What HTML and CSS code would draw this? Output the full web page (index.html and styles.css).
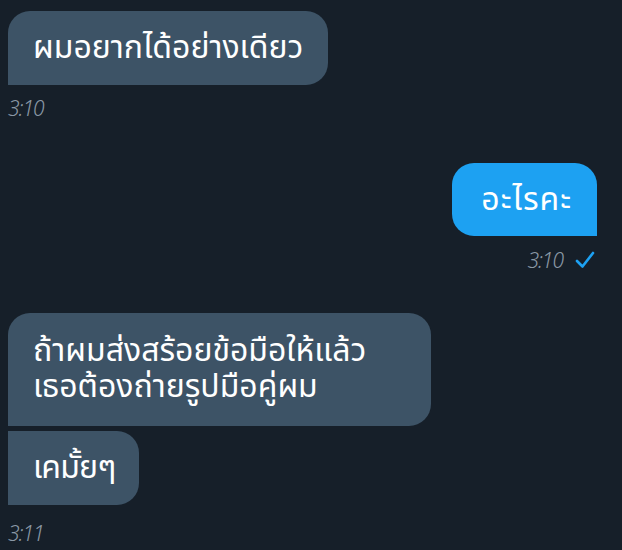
FILE: index.html
```html
<!DOCTYPE html>
<html lang="th">
<head>
<meta charset="utf-8">
<link rel="stylesheet" href="styles.css">
</head>
<body>
<div class="chat">
  <div class="msg in">
    <div class="bubble in-single">ผมอยากได้อย่างเดียว</div>
    <div class="time">3:10</div>
  </div>
  <div class="msg out">
    <div class="bubble out-single">อะไรคะ</div>
    <div class="time out-time">3:10
      <svg class="check" viewBox="0 0 20 18" width="20" height="18"><path d="M2 10 L7.5 15.5 L18 2" fill="none" stroke="#1da1f2" stroke-width="2.6" stroke-linecap="round" stroke-linejoin="round"/></svg>
    </div>
  </div>
  <div class="msg in group">
    <div class="bubble in-first">ถ้าผมส่งสร้อยข้อมือให้แล้ว<br>เธอต้องถ่ายรูปมือคู่ผม</div>
    <div class="bubble in-last">เคมั้ยๆ</div>
    <div class="time">3:11</div>
  </div>
</div>
</body>
</html>
```

FILE: styles.css
```css
html, body {
  margin: 0;
  padding: 0;
  background: #161f29;
}
body {
  width: 622px;
  height: 550px;
  overflow: hidden;
  font-family: "Noto Sans Thai", "Noto Sans", sans-serif;
}
.chat {
  display: flex;
  flex-direction: column;
  padding: 11px 25px 0 8px;
}
.msg {
  display: flex;
  flex-direction: column;
}
.msg.in { align-items: flex-start; }
.msg.out { align-items: flex-end; margin-top: 42px; }
.msg.group { margin-top: 40px; gap: 5px; }
.bubble {
  color: #ffffff;
  font-size: 32px;
  line-height: 36px;
  padding: 19px 25px;
  background: #3d5366;
}
.in-single { border-radius: 22px 22px 22px 0; }
.in-first { border-radius: 22px 22px 22px 0; padding: 20px 65px 21px 25px; }
.in-last { border-radius: 0 22px 22px 0; padding: 19px 24px 19px 25px; letter-spacing: -0.8px; }
.out-single { background: #1da1f2; border-radius: 22px 22px 0 22px; padding: 19px 25px 18px 29px; letter-spacing: 1px; }
.time {
  color: #8a98a5;
  font-family: "Noto Sans", sans-serif;
  font-style: italic;
  font-weight: 300;
  font-size: 21px;
  line-height: 26px;
  margin-top: 10px;
  letter-spacing: -1px;
}
.out-time {
  display: flex;
  align-items: center;
  gap: 12px;
  margin-top: 11px;
  margin-right: 2px;
}
.check { display: block; }
```
